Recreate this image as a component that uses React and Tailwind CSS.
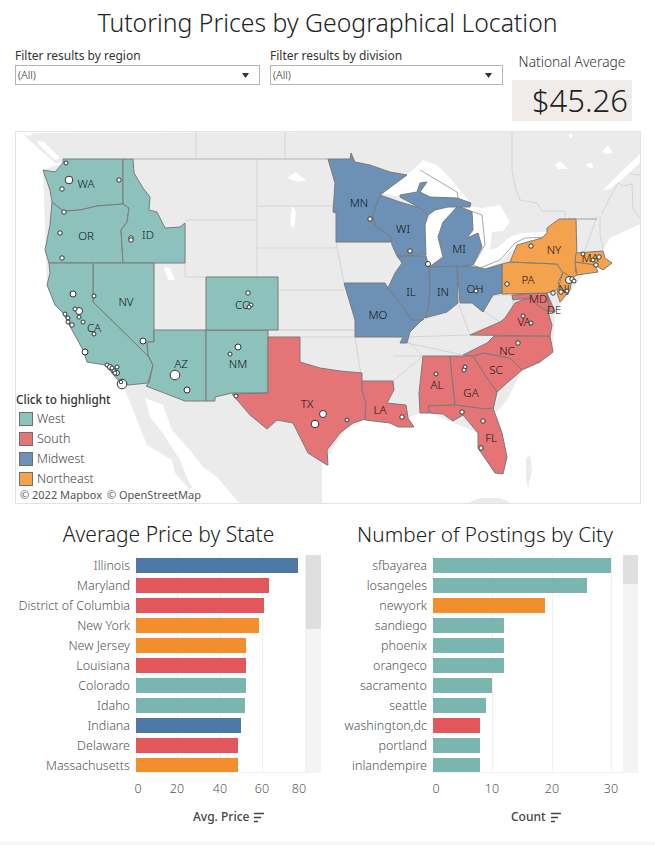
const WEST = '#8cc1bc';
const SOUTH = '#e47476';
const MIDWEST = '#6d91b6';
const NORTHEAST = '#f4a24d';

const BAR_WEST = '#7ab6af';
const BAR_SOUTH = '#e1575a';
const BAR_MIDWEST = '#4e79a7';
const BAR_NORTHEAST = '#f28e2b';

// page coordinates, the svg viewBox starts at the map's corner
const states = [
  [WEST, '63,159 123,159 123,204 97,206 80,210 63,211 52,202 50,190 43,170 55,172 63,163'],
  [WEST, '52,202 63,211 80,210 97,206 123,204 129,208 127,222 121,230 123,263 49,263 45,250 50,225'],
  [WEST, '123,159 133,159 134,173 143,188 150,197 149,210 157,212 165,228 180,227 185,223 185,263 123,263 121,230 127,222 129,208 123,204'],
  [WEST, '93,263 154,263 154,342 147,342 148,356 93,302'],
  [WEST, '49,263 93,263 93,302 148,356 153,365 148,383 128,385 118,380 105,365 87,362 83,350 72,330 63,313 55,305 47,285 50,273'],
  [WEST, '154,330 206,330 206,401 185,401 146,386 149,383 153,365 148,355 147,342 154,342'],
  [WEST, '206,330 268,330 268,393 232,393 215,397 215,401 206,401'],
  [WEST, '206,277 278,277 278,330 206,330'],
  [SOUTH, '268,337 300,337 300,362 320,368 340,371 362,373 362,390 366,403 365,419 353,423 340,433 327,450 328,465 327,465 308,453 293,423 277,420 267,429 250,415 232,394 268,393'],
  [SOUTH, '362,381 393,381 394,390 387,403 406,405 408,418 414,427 398,427 390,423 365,420 366,403 362,390'],
  [SOUTH, '423,356 450,356 455,405 428,406 430,413 420,413 419,393'],
  [SOUTH, '450,356 473,356 487,378 497,392 493,410 485,409 455,405'],
  [SOUTH, '473,356 483,353 510,358 522,370 507,383 497,392 487,378'],
  [SOUTH, '463,355 487,343 494,336 550,336 553,352 540,362 522,370 510,358 483,353 473,356'],
  [SOUTH, '428,406 455,405 485,409 493,408 502,433 507,457 503,474 495,473 478,448 478,433 463,415 453,421 443,414 430,413'],
  [SOUTH, '470,335 500,322 505,318 515,303 522,300 530,298 540,307 548,312 552,325 550,336'],
  [SOUTH, '512,295 547,293 550,312 540,307 530,298 513,300'],
  [SOUTH, '547,293 555,312 550,312'],
  [NORTHEAST, '502,264 510,262 557,264 563,272 558,283 562,288 547,293 502,294'],
  [NORTHEAST, '510,262 517,245 542,238 547,233 547,228 559,219 576,219 577,260 575,272 590,270 577,275 567,280 563,273 557,264'],
  [NORTHEAST, '563,272 572,278 570,290 560,302 557,293 559,285'],
  [NORTHEAST, '576,253 603,251 605,258 612,263 603,270 595,265 575,262'],
  [NORTHEAST, '575,262 595,265 598,272 577,275'],
  [MIDWEST, '328,159 350,159 351,153 355,162 370,165 390,172 407,175 380,195 373,215 375,225 391,237 391,242 336,242 336,213 333,212 335,183'],
  [MIDWEST, '380,195 400,202 420,208 428,215 425,225 426,255 397,256 392,245 391,237 375,225 373,215'],
  [MIDWEST, '400,195 417,192 420,183 427,182 420,192 430,197 457,198 471,203 470,207 459,207 448,207 435,210 428,215 420,208 400,197'],
  [MIDWEST, '460,207 472,212 473,230 467,238 478,233 482,247 473,265 457,267 429,267 443,257 438,237 443,222 457,207'],
  [MIDWEST, '397,256 426,256 429,267 430,290 428,310 423,320 420,320 408,322 400,303 388,288 395,273 402,263'],
  [MIDWEST, '429,267 457,266 458,303 447,312 425,318 428,310 430,290'],
  [MIDWEST, '457,266 477,267 485,269 502,264 502,293 493,295 483,312 472,303 460,303'],
  [MIDWEST, '344,283 385,283 388,288 400,303 412,320 422,320 410,332 407,343 400,343 403,337 355,337 355,320'],
];

const grayBorders = [
  '196,131 196,159', '285,131 285,159',
  '133,159 328,159',
  '257,159 257,277', '185,220 257,220', '257,206 336,206', '257,248 336,248', '257,290 344,290',
  '185,223 185,277 206,277', '154,263 154,277', '278,290 278,330 355,330', '268,330 355,330',
  '336,242 344,283', '391,242 345,242', '300,337 355,337', '355,337 362,381',
  '407,343 463,355', '403,337 470,335', '393,381 423,356', '393,356 423,356', '423,356 403,337',
  '458,303 470,335', '493,295 512,295 513,308', '472,303 500,322',
  '520,200 537,203 542,211 565,211 565,219', '575,219 597,219', '597,216 585,251', '600,216 600,234 603,249',
  '602,214 608,201 618,183 623,186 632,184 633,209 640,218', '630,174 640,175',
  '512,131 512,170 516,190 520,200',
];

const lakeBorder = '460,207 482,215 485,245 473,265 480,268 500,260 515,243 525,238 547,237';

const dots = [
  [66, 163, 2], [69, 180, 3.8], [62, 189, 2.2], [119, 180, 2.2], [64, 212, 2.2], [60, 233, 2.2], [62, 258, 2.2],
  [131, 238, 2.2], [131, 240, 2.2], [73, 294, 3], [94, 296, 2], [79, 311, 3.5], [75, 309, 2], [65, 314, 2],
  [68, 318, 2], [79, 317, 2], [248, 293, 2.2], [251, 305, 2], [249, 307, 2], [68, 322, 2], [72, 325, 2.2],
  [83, 322, 2], [94, 334, 2], [143, 341, 3], [85, 352, 3], [107, 365, 2], [110, 367, 2.5], [112, 368, 2],
  [117, 367, 2], [114, 371, 2], [117, 373, 2.5], [115, 373, 2], [122, 384, 4.8], [121, 382, 1.8], [175, 375, 4.8],
  [187, 390, 3], [238, 347, 3], [230, 354, 2], [236, 396, 2], [323, 414, 3.5], [315, 424, 3.8], [347, 420, 2],
  [402, 417, 2.2], [436, 374, 2], [465, 367, 2], [464, 370, 2], [462, 412, 2.2], [483, 421, 2.2], [481, 448, 2.2],
  [518, 343, 2.2], [531, 323, 2], [370, 219, 2.2], [410, 251, 2.2], [428, 264, 2.5], [476, 291, 2], [507, 284, 2.2],
  [531, 246, 2.2], [583, 254, 2], [599, 257, 2.2], [593, 260, 2], [596, 265, 2.2], [569, 280, 3.5], [572, 279, 2.2],
  [574, 281, 2], [567, 291, 2], [561, 292, 2.2], [553, 293, 2.2], [523, 316, 2],
];

const labels = [
  ['WA', 86, 183], ['OR', 86, 235], ['ID', 148, 234], ['NV', 126, 301], ['CO', 243, 304], ['CA', 94, 327],
  ['AZ', 181, 363], ['NM', 238, 363], ['TX', 307, 403], ['LA', 380, 409], ['AL', 437, 384], ['GA', 471, 392],
  ['SC', 496, 369], ['NC', 507, 350], ['FL', 491, 437], ['VA', 524, 321], ['MN', 359, 202], ['WI', 403, 228],
  ['MI', 459, 248], ['IL', 411, 291], ['IN', 443, 291], ['OH', 475, 288], ['MO', 378, 314], ['PA', 528, 279],
  ['NY', 554, 249], ['MA', 590, 257], ['NJ', 564, 288], ['MD', 538, 298], ['DE', 554, 309],
];

const priceRows = [
  ['Illinois', 162, BAR_MIDWEST],
  ['Maryland', 133, BAR_SOUTH],
  ['District of Columbia', 128, BAR_SOUTH],
  ['New York', 123, BAR_NORTHEAST],
  ['New Jersey', 110, BAR_NORTHEAST],
  ['Louisiana', 110, BAR_SOUTH],
  ['Colorado', 110, BAR_WEST],
  ['Idaho', 109, BAR_WEST],
  ['Indiana', 105, BAR_MIDWEST],
  ['Delaware', 102, BAR_SOUTH],
  ['Massachusetts', 102, BAR_NORTHEAST],
];

const cityRows = [
  ['sfbayarea', 178, BAR_WEST],
  ['losangeles', 154, BAR_WEST],
  ['newyork', 112, BAR_NORTHEAST],
  ['sandiego', 71, BAR_WEST],
  ['phoenix', 71, BAR_WEST],
  ['orangeco', 71, BAR_WEST],
  ['sacramento', 59, BAR_WEST],
  ['seattle', 53, BAR_WEST],
  ['washington,dc', 47, BAR_SOUTH],
  ['portland', 47, BAR_WEST],
  ['inlandempire', 47, BAR_WEST],
];

function Filter({ label, className }) {
  return (
    <div className={className}>
      <div className="text-[12px] leading-[16px] text-[#333] mt-[4px]">{label}</div>
      <div className="h-[20px] mt-[1px] border border-[#b4b4b4] bg-white flex items-center justify-between pl-[2px] pr-[10px] text-[11px] font-light text-[#222]">
        <span>(All)</span>
        <svg width="7" height="5" viewBox="0 0 7 5"><path d="M0 0h7L3.500 5z" fill="#333" /></svg>
      </div>
    </div>
  );
}

function UsMap() {
  return (
    <svg viewBox="16 132 624 371" width="624" height="371" className="block">
      <rect x="15" y="131" width="626" height="373" fill="#fff" />
      {/* land */}
      <polygon fill="#ebebeb" points="15,133 24,135 40,150 55,163 63,163 43,170 47,285 63,313 123,385 137,420 147,445 172,460 175,473 190,490 240,504 322,504 322,465 345,430 365,420 408,418 420,413 430,413 478,433 507,400 522,370 553,352 555,312 575,285 603,251 610,238 640,224 640,131" />
      {/* gulf of california, st lawrence and the like */}
      <polygon fill="#fff" points="145,398 163,405 172,430 190,450 203,467 217,477 240,504 215,504 195,492 188,480 180,460 162,432 150,417" />
      <polygon fill="#fff" points="603,190 620,173 640,154 640,163 620,181 610,189" />
      <polygon fill="#fff" points="555,165 560,161 563,164 568,169 558,169" />
      <polygon fill="#fff" points="586,164 592,163 593,168 589,168" />
      <polygon fill="#fff" points="602,152 608,145 613,153 607,154" />
      <polygon fill="#fff" points="569,138 570,133 572,134 572,138" />
      <polygon fill="#fff" points="15,131 36,131 30,136 20,134" />
      <polygon fill="#fff" points="36,141 44,142 60,158 55,160 44,150" />
      {/* lakes */}
      <polygon fill="#fff" points="382,193 407,175 415,168 423,160 437,165 450,178 460,190 472,205 440,200 400,197" />
      <polygon fill="#fff" points="425,225 435,210 450,205 459,207 445,265 428,265 425,250" />
      <polygon fill="#fff" points="458,205 483,208 500,205 510,222 503,231 492,232 490,250 497,248 510,237 522,233 548,232 547,238 525,242 512,250 500,262 483,270 472,266" />
      <polygon fill="#fff" points="287,178 296,172 306,180 298,182" />
      <polygon fill="#fff" points="292,205 296,212 294,228 290,225" />
      <polygon fill="#fff" points="164,267 170,268 175,280 168,280" />
      {/* keys, cuba, bahamas */}
      <polygon fill="#ebebeb" points="465,504 480,498 500,498 513,504" />
      <polygon fill="#ebebeb" points="526,458 530,455 532,470 528,488 526,480" />

      {grayBorders.map((pts) => (
        <polyline key={pts} points={pts} fill="none" stroke="#d5d5d5" strokeWidth="1" />
      ))}
      <polyline points="133,159 328,159" fill="none" stroke="#bdbdbd" strokeWidth="1" />
      <polyline points="420,170 457,192 458,198" fill="none" stroke="#a8a8a8" strokeWidth="1" />
      <polyline points={lakeBorder} fill="none" stroke="#a8a8a8" strokeWidth="1" />
      <polyline points="568,219 575,219 597,219" fill="none" stroke="#a8a8a8" strokeWidth="1" />

      {states.map(([fill, pts]) => (
        <polygon key={pts} points={pts} fill={fill} stroke="#7b7b7b" strokeWidth="1" strokeLinejoin="round" />
      ))}

      {labels.map(([name, x, y]) => (
        <text key={name} x={x} y={y} textAnchor="middle" dominantBaseline="central" fontSize="11.500" fontWeight="300" fill="#111">
          {name}
        </text>
      ))}

      {dots.map(([x, y, r]) => (
        <circle key={`${x}-${y}`} cx={x} cy={y} r={r} fill="#fff" stroke="#333" strokeWidth="1" />
      ))}
    </svg>
  );
}

function Legend() {
  const items = [
    ['West', 'bg-[#8cc1bc]'],
    ['South', 'bg-[#e47476]'],
    ['Midwest', 'bg-[#6d91b6]'],
    ['Northeast', 'bg-[#f4a24d]'],
  ];
  return (
    <div className="absolute left-0 bottom-[14px]">
      <div className="text-[11.750px] leading-[16px] font-medium text-[#333] mb-[2px] whitespace-nowrap">Click to highlight</div>
      {items.map(([name, color]) => (
        <div key={name} className="flex items-center h-[20px] pl-[3px] gap-[4px]">
          <span className={`w-[14px] h-[14px] border border-[#6e6e6e] ${color}`} />
          <span className="text-[12.500px] font-light text-[#444]">{name}</span>
        </div>
      ))}
    </div>
  );
}

function SortIcon() {
  return (
    <svg width="11" height="11" viewBox="0 0 11 11" className="ml-[5px]">
      <path d="M0 1.500h10M0 5.500h7M0 9.500h4" stroke="#444" strokeWidth="1.500" fill="none" />
    </svg>
  );
}

function BarChart({ title, titleClass, rows, labelWidth, plotWidth, ticks, thumb, axisTitle, axisPad, className }) {
  return (
    <section className={className}>
      <h2 className={`leading-[26px] font-light text-[#222] text-center h-[35px] pt-[1px] ${titleClass}`}>{title}</h2>
      <div className="flex">
        <div className="flex flex-col h-[218px] overflow-hidden" style={{ width: labelWidth }}>
          {rows.map(([name]) => (
            <div key={name} className="h-[20px] shrink-0 pr-[6px] text-right text-[12.500px] font-light leading-[22px] text-[#555] whitespace-nowrap">
              {name}
            </div>
          ))}
        </div>
        <div className="relative h-[218px] overflow-hidden border-b border-[#eeeeee]" style={{ width: plotWidth }}>
          {ticks.map(([, x]) => (
            <div key={x} className="absolute top-0 bottom-0 w-px bg-[#f0f0f0]" style={{ left: x }} />
          ))}
          {rows.map(([name, width, color]) => (
            <div key={name} className="relative h-[20px] pt-[3px]">
              <div className="h-[15px]" style={{ width, backgroundColor: color }} />
            </div>
          ))}
        </div>
        <div className="w-[15px] h-[218px] bg-[#f4f4f4]">
          <div className="bg-[#dfdfdf]" style={{ height: thumb }} />
        </div>
      </div>
      <div className="relative h-[24px]" style={{ marginLeft: labelWidth, width: plotWidth }}>
        {ticks.map(([text, x, shift]) => (
          <span key={x} className="absolute top-[6px] -translate-x-1/2 text-[12.500px] font-light leading-[20px] text-[#555]" style={{ left: x + shift }}>
            {text}
          </span>
        ))}
      </div>
      <div className="flex items-center h-[22px] mt-[9px] text-[12px] font-medium text-[#444]" style={{ paddingLeft: axisPad }}>
        {axisTitle}
        <SortIcon />
      </div>
    </section>
  );
}

export default function App() {
  return (
    <div className="w-[655px] h-[845px] bg-white overflow-hidden relative font-['Noto_Sans',sans-serif]">
      <h1 className="h-[44px] text-center text-[24.800px] leading-[44px] font-light text-[#222]">
        Tutoring Prices by Geographical Location
      </h1>

      <div className="flex h-[87px] pl-[15px]">
        <Filter label="Filter results by region" className="w-[245px]" />
        <Filter label="Filter results by division" className="w-[233px] ml-[10px]" />
        <div className="w-[120px] ml-[9px]">
          <div className="text-[13.800px] font-light leading-[16px] text-center text-[#333] mt-[10px] mb-[10px] whitespace-nowrap">National Average</div>
          <div className="h-[41px] bg-[#efecea] text-right pr-[4px] text-[31px] font-light leading-[41px] text-[#222]">$45.26</div>
        </div>
      </div>

      <div className="relative w-[626px] h-[373px] ml-[15px] border border-[#e3e3e3]">
        <UsMap />
        <Legend />
        <div className="absolute left-[3px] bottom-[1px] flex gap-[5px] bg-white/70 px-[1px] text-[11px] leading-[14px] text-[#555]">
          <span>© 2022 Mapbox</span>
          <span>© OpenStreetMap</span>
        </div>
      </div>

      <div className="flex mt-[16px]">
        <BarChart
          className="w-[327px]"
          titleClass="pl-[10px] text-[21px]"
          title="Average Price by State"
          rows={priceRows}
          labelWidth={136}
          plotWidth={170}
          ticks={[['0', 0, 2], ['20', 41, 0], ['40', 84, 0], ['60', 126, 0], ['80', 169, -6]]}
          thumb={74}
          axisTitle="Avg. Price"
          axisPad={193}
        />
        <BarChart
          className="w-[328px]"
          titleClass="pr-[12px] text-[20.800px]"
          title="Number of Postings by City"
          rows={cityRows}
          labelWidth={106}
          plotWidth={190}
          ticks={[['0', 0, 3], ['10', 59, 0], ['20', 119, 0], ['30', 178, 0]]}
          thumb={29}
          axisTitle="Count"
          axisPad={184}
        />
      </div>

      <div className="absolute left-0 right-0 bottom-0 h-[3px] bg-[#f5f5f5]" />
    </div>
  );
}
